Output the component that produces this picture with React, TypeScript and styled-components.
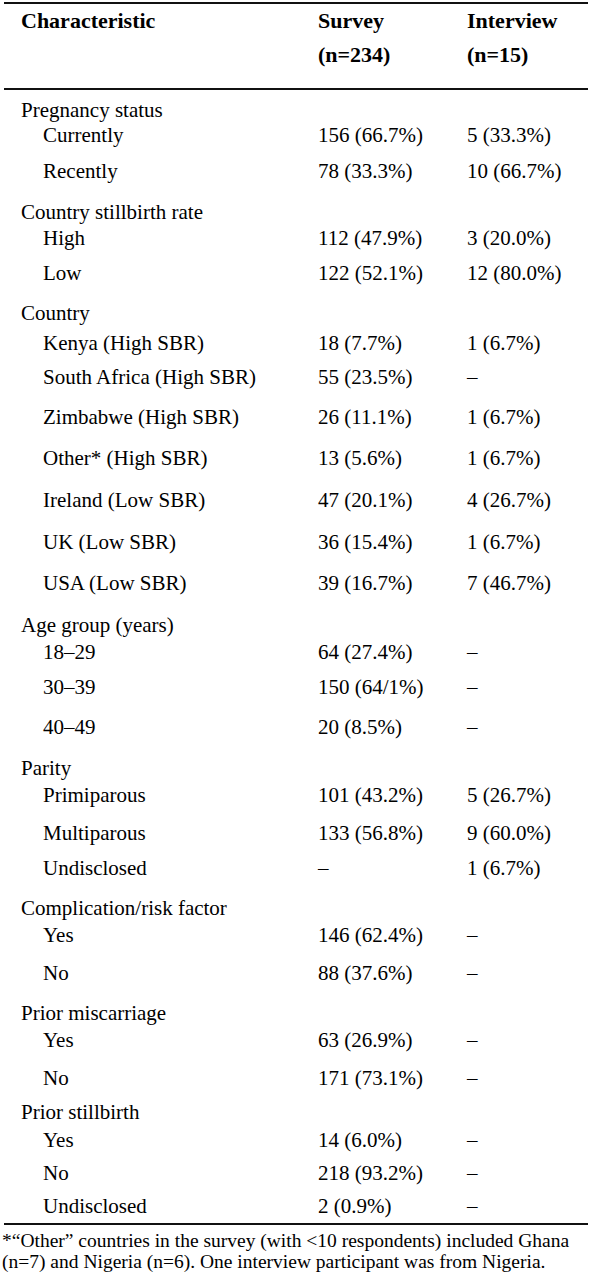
import styled, { createGlobalStyle } from "styled-components";

type Row = {
    label: string
    survey?: string
    interview?: string
    sub?: boolean
    gap: number
}

// gap = space above the row, taken from the reference
const rows: Row[] = [
    { label: "Pregnancy status", gap: 8 },
    { label: "Currently", survey: "156 (66.7%)", interview: "5 (33.3%)", sub: true, gap: 1 },
    { label: "Recently", survey: "78 (33.3%)", interview: "10 (66.7%)", sub: true, gap: 12 },
    { label: "Country stillbirth rate", gap: 17 },
    { label: "High", survey: "112 (47.9%)", interview: "3 (20.0%)", sub: true, gap: 2 },
    { label: "Low", survey: "122 (52.1%)", interview: "12 (80.0%)", sub: true, gap: 11 },
    { label: "Country", gap: 16 },
    { label: "Kenya (High SBR)", survey: "18 (7.7%)", interview: "1 (6.7%)", sub: true, gap: 6 },
    { label: "South Africa (High SBR)", survey: "55 (23.5%)", interview: "–", sub: true, gap: 10 },
    { label: "Zimbabwe (High SBR)", survey: "26 (11.1%)", interview: "1 (6.7%)", sub: true, gap: 16 },
    { label: "Other* (High SBR)", survey: "13 (5.6%)", interview: "1 (6.7%)", sub: true, gap: 17 },
    { label: "Ireland (Low SBR)", survey: "47 (20.1%)", interview: "4 (26.7%)", sub: true, gap: 18 },
    { label: "UK (Low SBR)", survey: "36 (15.4%)", interview: "1 (6.7%)", sub: true, gap: 18 },
    { label: "USA (Low SBR)", survey: "39 (16.7%)", interview: "7 (46.7%)", sub: true, gap: 17 },
    { label: "Age group (years)", gap: 18 },
    { label: "18–29", survey: "64 (27.4%)", interview: "–", sub: true, gap: 3 },
    { label: "30–39", survey: "150 (64/1%)", interview: "–", sub: true, gap: 11 },
    { label: "40–49", survey: "20 (8.5%)", interview: "–", sub: true, gap: 16 },
    { label: "Parity", gap: 17 },
    { label: "Primiparous", survey: "101 (43.2%)", interview: "5 (26.7%)", sub: true, gap: 3 },
    { label: "Multiparous", survey: "133 (56.8%)", interview: "9 (60.0%)", sub: true, gap: 14 },
    { label: "Undisclosed", survey: "–", interview: "1 (6.7%)", sub: true, gap: 11 },
    { label: "Complication/risk factor", gap: 16 },
    { label: "Yes", survey: "146 (62.4%)", interview: "–", sub: true, gap: 3 },
    { label: "No", survey: "88 (37.6%)", interview: "–", sub: true, gap: 14 },
    { label: "Prior miscarriage", gap: 16 },
    { label: "Yes", survey: "63 (26.9%)", interview: "–", sub: true, gap: 3 },
    { label: "No", survey: "171 (73.1%)", interview: "–", sub: true, gap: 14 },
    { label: "Prior stillbirth", gap: 10 },
    { label: "Yes", survey: "14 (6.0%)", interview: "–", sub: true, gap: 4 },
    { label: "No", survey: "218 (93.2%)", interview: "–", sub: true, gap: 9 },
    { label: "Undisclosed", survey: "2 (0.9%)", interview: "–", sub: true, gap: 9 },
]

const GlobalStyle = createGlobalStyle`
    body {
        margin: 0;
        background: #ffffff;
        color: #000000;
        font-family: "Liberation Serif", "Times New Roman", serif;
    }
`

function App() {
    return (
        <>
            <GlobalStyle />
            <Page>
                <Rule $top={2} />
                <HeaderRow>
                    <HeadCell>Characteristic</HeadCell>
                    <HeadCell>Survey<br />(n=234)</HeadCell>
                    <HeadCell>Interview<br />(n=15)</HeadCell>
                </HeaderRow>
                <Rule $top={16} />
                <Body>
                    {rows.map((row, i) => (
                        <DataRow key={i} $gap={row.gap}>
                            <LabelCell $sub={row.sub}>{row.label}</LabelCell>
                            <ValueCell>{row.survey}</ValueCell>
                            <ValueCell>{row.interview}</ValueCell>
                        </DataRow>
                    ))}
                </Body>
                <Rule $top={5} />
                <Footnote>
                    <span>*“Other” countries in the survey (with &lt;10 respondents) included Ghana</span>
                    <span>(n=7) and Nigeria (n=6). One interview participant was from Nigeria.</span>
                </Footnote>
            </Page>
        </>
    )
}

export default App

const Page = styled.div`
    width: 591px;
    height: 1280px;
    overflow: hidden;
    display: flex;
    flex-direction: column;
`

const Rule = styled.div<{ $top: number }>`
    margin: ${props => props.$top}px 3px 0 4px;
    border-top: 2px solid #111111;
`

const HeaderRow = styled.div`
    display: grid;
    grid-template-columns: 297px 149px 1fr;
    padding-left: 21px;
`

const HeadCell = styled.div`
    font-size: 22px;
    font-weight: bold;
    line-height: 34px;
`

const Body = styled.div`
    display: flex;
    flex-direction: column;
`

const DataRow = styled.div<{ $gap: number }>`
    display: grid;
    grid-template-columns: 297px 149px 1fr;
    padding-left: 21px;
    margin-top: ${props => props.$gap}px;
    font-size: 21px;
    line-height: 24px;
    height: 24px;
    white-space: nowrap;
`

const LabelCell = styled.div<{ $sub?: boolean }>`
    padding-left: ${props => props.$sub ? 22 : 0}px;
`

const ValueCell = styled.div``

const Footnote = styled.div`
    display: flex;
    flex-direction: column;
    margin-top: 5px;
    padding-left: 2px;
    font-size: 19.5px;
    line-height: 21px;
    white-space: nowrap;
`
